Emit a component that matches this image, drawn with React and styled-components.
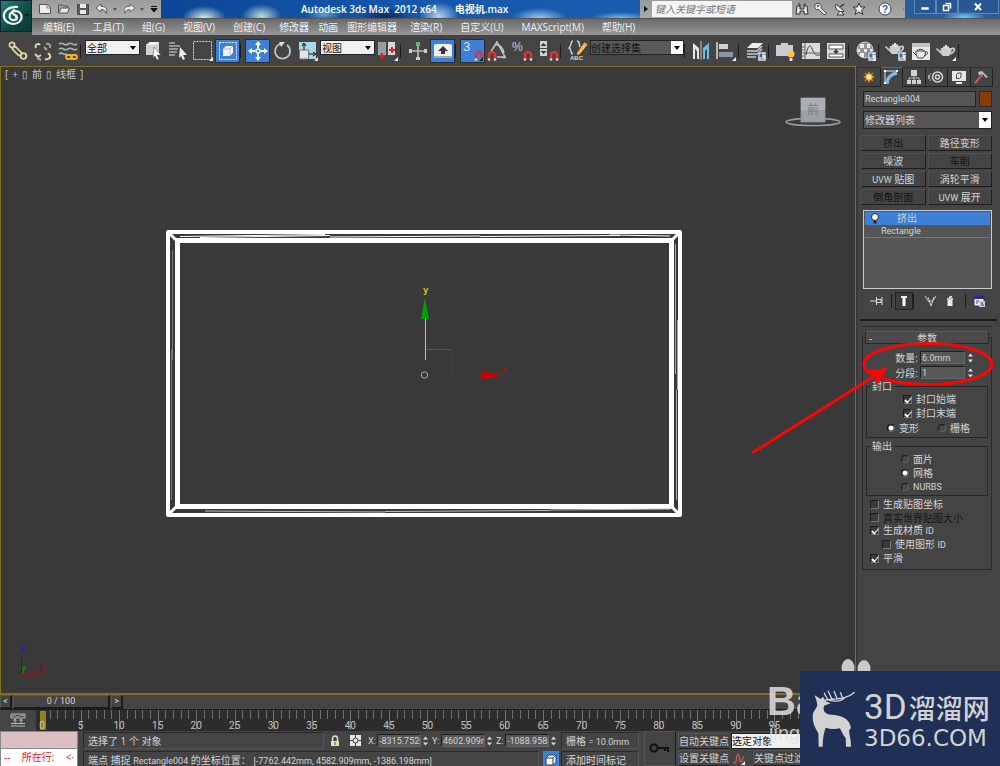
import React from "react";
import styled, { createGlobalStyle, css } from "styled-components";

const GlobalStyle = createGlobalStyle`
  * { box-sizing: border-box; }
  html, body { margin: 0; padding: 0; background: #444; }
  body, button, input, select {
    font-family: "Open Sans", "Noto Sans CJK SC", sans-serif;
    font-size: 10px;
    line-height: 12px;
    color: #d4d4d4;
  }
  button, input, select { margin: 0; padding: 0; border: 0; background: none; border-radius: 0; outline: none; }
  fieldset { margin: 0; min-width: 0; }
`;

const Shell = styled.div`
  position: relative;
  display: flex;
  flex-direction: column;
  height: 100vh;
  min-height: 600px;
  overflow: hidden;
  background: #444;
`;

const En = styled.span`
  font-family: Roboto, sans-serif;
  font-size: 9px;
`;

/* ---------- header ---------- */
const Header = styled.header`
  display: flex;
  height: 35px;
  flex: none;
`;
const AppButton = styled.button`
  width: 32px;
  height: 32px;
  flex: none;
  background: linear-gradient(135deg, #2f8078, #0c4743 60%, #093a38);
  border: 1px solid #123;
`;
const HeaderRows = styled.div`
  flex: 1;
  min-width: 0;
  display: flex;
  flex-direction: column;
`;
const TitleRow = styled.div`
  display: flex;
  height: 18px;
`;
const QuickBar = styled.div`
  display: flex;
  align-items: center;
  width: 129px;
  padding-left: 3px;
  background: linear-gradient(#9c9c9c, #aeaeae);
`;
const QuickButton = styled.button`
  display: flex;
  align-items: center;
  justify-content: center;
  width: ${(p) => p.$w || 19}px;
  height: 18px;
  flex: none;
`;
const Title = styled.div`
  flex: 1;
  display: flex;
  align-items: center;
  gap: 18px;
  padding-left: 140px;
  white-space: nowrap;
  font-weight: 600;
  color: #fff;
  background:
    radial-gradient(ellipse 22px 12px at 9% 100%, #d8efe0, transparent),
    radial-gradient(ellipse 20px 12px at 21% 90%, #b9dcd5, transparent),
    radial-gradient(ellipse 18px 8px at 34% 80%, #5d9fd0, transparent),
    radial-gradient(ellipse 26px 9px at 47% 90%, #082858, transparent),
    radial-gradient(ellipse 20px 14px at 58% 90%, #b4d4f0, transparent),
    radial-gradient(ellipse 28px 10px at 79% 100%, #9bcbe8, transparent),
    radial-gradient(ellipse 30px 6px at 96% 100%, #7fb5e0, transparent),
    linear-gradient(90deg, #0c4696, #1557ac 50%, #1a5db0);
`;
const SearchArea = styled.div`
  display: flex;
  width: 265px;
  flex: none;
  align-items: center;
  background: linear-gradient(#999, #a8a8a8);
`;
const SearchInput = styled.input`
  width: 140px;
  height: 16px;
  padding-left: 3px;
  background: #f4f4f4;
  color: #555;
  font-style: italic;
  &::placeholder { color: #777; opacity: 1; }
`;
const WindowButtons = styled.div`
  display: flex;
  width: 95px;
  flex: none;
  padding: 0 1px 4px 9px;
  background: radial-gradient(ellipse 22px 8px at 62% 100%, #6fd0ff, transparent), #2a5c9c;
`;
const WindowButton = styled.button`
  flex: ${(p) => p.$grow || 1};
  display: flex;
  align-items: center;
  justify-content: center;
  border: 1px solid #5d87b8;
  border-top: 0;
  background: rgba(40, 84, 140, 0.6);
`;
const MenuRow = styled.nav`
  display: flex;
  flex: 1;
  align-items: center;
  padding-left: 2px;
  border-top: 1px solid #555;
  background: linear-gradient(#6a6a6a, #969696);
`;
const MenuItem = styled.button`
  padding: ${(p) => (p.$plain ? "0 4px 0 5px" : "0 9px")};
  color: #f0f0f0;
  white-space: nowrap;
`;

/* ---------- toolbar ---------- */
const Toolbar = styled.div`
  display: flex;
  align-items: center;
  height: 31px;
  flex: none;
  padding-left: 5px;
  background: #444;
`;
const Tool = styled.button`
  display: flex;
  align-items: center;
  justify-content: center;
  width: 25px;
  height: 24px;
  flex: none;
  ${(p) => p.$on && css`
    background: #3c80d8;
    border: 1px solid #26303c;
  `}
`;
const Separator = styled.span`
  width: 5px;
  height: 14px;
  flex: none;
  border-left: 1px solid #1c1c1c;
  margin-right: ${(p) => (p.$tight ? "-1px" : "0")};
`;
const SelectBox = styled.label`
  position: relative;
  display: flex;
  width: ${(p) => p.$w || "auto"};
  height: ${(p) => p.$h || 15}px;
  flex: none;
  margin: ${(p) => p.$m || "0 0 6px"};
  border: 1px solid #222;
  background: ${(p) => p.$bg || "#f0f0f0"};
  &::after {
    content: "";
    position: absolute;
    right: 3px;
    top: calc(50% - 2px);
    border: 3px solid transparent;
    border-top: 4px solid #000;
    border-bottom: 0;
    pointer-events: none;
  }
`;
const Select = styled.select`
  appearance: none;
  width: 100%;
  padding-left: ${(p) => p.$pad || 0}px;
  color: ${(p) => p.$color || "#111"};
  background: ${(p) => (p.$split ? "linear-gradient(90deg, transparent calc(100% - 12px), #fff 0)" : "none")};
`;

/* ---------- body ---------- */
const Main = styled.main`
  display: flex;
  flex: 1;
  min-height: 0;
`;
const Viewport = styled.section`
  position: relative;
  flex: 1;
  min-width: 0;
  border: 1px solid #80701f;
  border-bottom-width: 2px;
  background: #393939;
`;
const Scene = styled.svg`
  display: block;
  width: 100%;
  height: 100%;
`;
const ViewLabel = styled.div`
  position: absolute;
  left: 4px;
  top: 1px;
  display: flex;
  gap: 4px;
  white-space: nowrap;
  color: #ccc;
`;
const Panel = styled.aside`
  width: 144px;
  flex: none;
  padding: 1px 8px 0 5px;
  border-left: 2px solid #393939;
  background: #444;
`;
const Tabs = styled.div`
  display: flex;
  margin: 0 -1px 0 -5px;
  height: 20px;
`;
const Tab = styled.button`
  flex: 1;
  display: flex;
  align-items: center;
  justify-content: center;
  border-right: 1px solid #222;
  border-top: 1px solid ${(p) => (p.$on ? "#666" : "#333")};
  border-bottom: 1px solid ${(p) => (p.$on ? "transparent" : "#222")};
`;
const NameRow = styled.div`
  display: flex;
  gap: 3px;
  margin: 4px 0;
  height: 16px;
`;
const NameInput = styled.input`
  flex: 1;
  min-width: 0;
  padding-left: 1px;
  border: 1px solid #222;
  background: #555;
  font-family: Roboto, sans-serif;
  font-size: 9px;
`;
const Swatch = styled.button`
  width: 13px;
  border: 1px solid #2a2a2a;
  background: #8a3c08;
`;
const ModGrid = styled.div`
  display: grid;
  grid-template-columns: 1fr 1fr;
  gap: 2px;
  margin: 6px 0 5px -2px;
`;
const ModButton = styled.button`
  height: 16px;
  color: ${(p) => (p.$used ? "#141414" : "#d4d4d4")};
  border: 1px solid #505050;
  border-right-color: #1e1e1e;
  border-bottom-color: #1e1e1e;
`;
const Stack = styled.ul`
  list-style: none;
  margin: 0;
  padding: 1px;
  height: 79px;
  border: 1px solid #c8ccd0;
  background: #555;
`;
const StackItem = styled.li`
  display: flex;
  align-items: center;
  height: 13px;
  padding-left: ${(p) => (p.$on ? 6 : 16)}px;
  gap: 18px;
  border-bottom: 1px solid #777;
  ${(p) => p.$on && css`background: #3c80d8; border-color: #3c80d8;`}
`;
const StackTools = styled.div`
  display: flex;
  align-items: center;
  height: 24px;
  margin-bottom: 6px;
`;
const StackTool = styled.button`
  display: flex;
  align-items: center;
  justify-content: center;
  width: ${(p) => p.$w || 18}px;
  height: 18px;
  margin-right: ${(p) => p.$mr || 0}px;
  ${(p) => p.$on && css`border: 1px solid #222; background: #3d3d3d;`}
`;
const Divider = styled.hr`
  margin: 0 -5px 5px -3px;
  border: 0;
  border-top: 2px solid #1c1c1c;
`;
const Rollout = styled.section`
  position: relative;
  margin-left: -1px;
  padding: 4px 3px 0;
  border-top: 1px solid #2a2a2a;
`;
const RolloutFrame = styled.div`
  margin: -7px -3px 0;
  padding: 12px 3px 4px;
  border: 1px solid #292929;
`;
const RolloutHead = styled.button`
  position: relative;
  display: flex;
  width: 100%;
  height: 13px;
  align-items: center;
  justify-content: center;
  border: 1px solid #292929;
  border-top-color: #5a5a5a;
  background: #4a4a4a;
  &::before { content: "-"; position: absolute; left: 3px; }
`;
const Field = styled.label`
  display: flex;
  align-items: center;
  justify-content: flex-end;
  height: 15px;
  padding-right: 14px;
  gap: 2px;
`;
const SpinInput = styled.input`
  width: ${(p) => p.$w || 45}px;
  height: 13px;
  padding-left: 1px;
  border: 1px solid #1e1e1e;
  border-right-color: #666;
  border-bottom-color: #666;
  background: #585858;
  font-family: Roboto, sans-serif;
  font-size: 9px;
`;
const Spinner = styled.svg`
  width: 7px;
  height: 12px;
  flex: none;
`;
const Group = styled.fieldset`
  margin-top: ${(p) => p.$top || 0}px;
  padding: 0 0 1px;
  border: 1px solid #272727;
`;
const Legend = styled.legend`
  margin-left: 3px;
  padding: 0 2px;
  height: 12px;
`;
const Option = styled.label`
  display: flex;
  align-items: center;
  height: ${(p) => p.$h || 14}px;
  gap: 4px;
  padding-left: ${(p) => p.$indent || 0}px;
  color: ${(p) => (p.$off ? "#161616" : "#d4d4d4")};
  white-space: nowrap;
`;
const OptionPair = styled.div`
  display: flex;
  height: 16px;
  gap: 19px;
  align-items: center;
`;
const Check = styled.input`
  appearance: none;
  position: relative;
  width: 9px;
  height: 9px;
  flex: none;
  background: #3a3a3a;
  border: 1px solid #1a1a1a;
  border-right-color: #777;
  border-bottom-color: #777;
  &:checked::after {
    content: "";
    position: absolute;
    left: 2px;
    top: 0;
    width: 3px;
    height: 5px;
    border: solid #fff;
    border-width: 0 1px 2px 0;
    transform: rotate(40deg);
  }
`;
const Radio = styled.input`
  appearance: none;
  width: 8px;
  height: 8px;
  flex: none;
  border-radius: 50%;
  border: 1px solid #1a1a1a;
  border-right-color: #666;
  border-bottom-color: #666;
  background: #484848;
  &:checked { background: radial-gradient(circle, #fff 2px, #333 3px); }
`;
const Mark = styled.svg`
  position: absolute;
  right: -4px;
  top: 11px;
  width: 248px;
  height: 120px;
  pointer-events: none;
`;

/* ---------- timeline and status ---------- */
const Track = styled.div`
  display: flex;
  height: 14px;
  flex: none;
  gap: 1px;
  margin-right: 144px;
`;
const TrackButton = styled.button`
  width: ${(p) => p.$w}px;
  border: 1px solid #555;
  border-right: 2px solid #1c1c1c;
  border-bottom: 2px solid #1c1c1c;
  font-family: Roboto, sans-serif;
  font-size: 9px;
  line-height: 9px;
`;
const Timeline = styled.div`
  display: flex;
  height: 22px;
  flex: none;
  border-top: 1px solid #1c1c1c;
  background: #2c2c2c;
`;
const CurveButton = styled.button`
  width: 36px;
  flex: none;
  background: #444;
`;
const Ruler = styled.div`
  display: flex;
  flex: 1;
  padding: 0 187px 0 6px;
`;
const Major = styled.div`
  position: relative;
  display: flex;
  flex: 1;
`;
const Tick = styled.i`
  flex: 1;
  height: ${(p) => (p.$major ? 20 : 9)}px;
  border-left: 1px solid #707070;
`;
const TickLabel = styled.span`
  position: absolute;
  left: -10px;
  bottom: -1px;
  width: 20px;
  text-align: center;
  color: #c4c4c4;
  font-family: Roboto, sans-serif;
  font-size: 10px;
`;
const Playhead = styled.span`
  position: absolute;
  left: -2px;
  top: 1px;
  width: 6px;
  height: 19px;
  background: #8c8420;
`;
const Status = styled.footer`
  display: flex;
  height: 35px;
  flex: none;
  gap: 5px;
`;
const Listener = styled.div`
  width: 78px;
  flex: none;
  padding: 1px;
  background: #888;
`;
const ListenerLine = styled.div`
  height: ${(p) => p.$h}px;
  padding: 2px 3px;
  margin-bottom: 1px;
  background: ${(p) => p.$bg};
  display: flex;
  justify-content: space-between;
  color: #f01010;
  overflow: hidden;
`;
const StatusCol = styled.div`
  display: flex;
  flex-direction: column;
  gap: 1px;
  width: 556px;
  flex: none;
`;
const StatusLine = styled.div`
  display: flex;
  align-items: center;
  height: 18px;
  padding-top: 1px;
`;
const Prompt = styled.div`
  width: ${(p) => p.$w}px;
  height: 17px;
  padding: 2px 4px;
  white-space: nowrap;
  border: 1px solid #2a2a2a;
  border-right-color: #555;
  border-bottom-color: #555;
  margin-left: ${(p) => (p.$end ? "auto" : 0)};
  margin-right: ${(p) => p.$mr || 0}px;
`;
const IconSlot = styled.button`
  display: flex;
  width: 21px;
  height: 17px;
  align-items: center;
  justify-content: center;
  ${(p) => p.$on && css`width: 16px; background: #3c80d8;`}
`;
const Coord = styled.label`
  display: flex;
  align-items: center;
  width: 64px;
  gap: 1px;
  font-family: Roboto, sans-serif;
  font-size: 9px;
  & > span { width: 10px; padding-left: 2px; }
`;
const KeyButton = styled.button`
  width: 32px;
  border: 1px solid #555;
  border-right-color: #1e1e1e;
`;
const KeyCol = styled.div`
  display: flex;
  flex-direction: column;
  width: ${(p) => p.$w}px;
  padding-top: 2px;
  gap: 1px;
  margin-left: -3px;
`;
const FlatButton = styled.button`
  height: 16px;
  text-align: left;
  white-space: nowrap;
  border: 1px solid #555;
  border-width: 1px 0 1px 1px;
  border-bottom-color: #222;
`;
const KeyRow = styled.div`
  display: flex;
  align-items: center;
  gap: 8px;
`;

/* ---------- watermarks ---------- */
const Brand = styled.div`
  position: absolute;
  right: 0;
  bottom: 0;
  width: 200px;
  height: 95px;
  display: flex;
  background: #1f2f55;
  color: #d2d2d2;
`;
const BrandText = styled.div`
  display: flex;
  flex-direction: column;
  padding-top: 19px;
  white-space: nowrap;
`;
const BrandTop = styled.div`
  display: flex;
  align-items: center;
  gap: 2px;
  height: 36px;
  font: 500 27px/36px "Noto Sans CJK SC", sans-serif;
  & > span { font: 400 35px/36px Roboto, sans-serif; }
`;
const BrandBottom = styled.div`
  font: 400 23px/24px "DejaVu Sans", sans-serif;
`;
const Baidu = styled.div`
  position: absolute;
  right: 200px;
  bottom: 21px;
  width: 33px;
  overflow: hidden;
  color: rgba(225, 225, 225, 0.85);
  font: 700 40px/40px "Liberation Sans", sans-serif;
  & > small { display: block; padding-left: 2px; font-size: 20px; line-height: 24px; font-weight: 400; }
`;
const Paws = styled.svg`
  position: absolute;
  right: 128px;
  bottom: 90px;
  width: 32px;
  height: 18px;
`;

const G = ({ w = 22, h = 22, children }) => (
  <svg width={w} height={h} viewBox={`0 0 ${w} ${h}`} fill="none" aria-hidden="true">{children}</svg>
);
const Magnet = ({ x = 11, y = 10 }) => (
  <g transform={`translate(${x} ${y})`}>
    <path d="M2 9V5a3 3 0 0 1 6 0v4" stroke="#e03434" strokeWidth="2.500" />
    <path d="M.8 9.500h2.400M6.800 9.500h2.400" stroke="#eee" strokeWidth="2" />
  </g>
);
const Corner = () => <path d="M21 17v4h-4z" fill="#eee" />;
const Teapot = () => (
  <g>
    <path d="M6 9h10c1 2 1 5-2 8H8C5 15 5 12 6 9z" fill="#c9ced2" />
    <path d="M8 8.500h6M11 6v2" stroke="#dfe3e6" strokeWidth="2" />
    <path d="M6 14 1.500 9.500M16 10c4-2 5 1 0 5" stroke="#c9ced2" strokeWidth="1.600" />
  </g>
);
const Badge = () => (
  <g>
    <path d="M13 12h8v9h-8z" fill="#eee" stroke="#555" strokeWidth=".6" />
    <path d="M14.500 13.500h3v4h-3z" fill="#2e6cc0" />
    <path d="M18.500 14.500h2M14.500 19h5" stroke="#777" />
  </g>
);
const Spin = () => (
  <Spinner viewBox="0 0 7 12" aria-hidden="true"><path d="M3.500 1.500 6 4.500H1zM3.500 10.500 6 7.500H1z" fill="#ddd" /></Spinner>
);

const icons = {
  link: <G><g fill="none" stroke="#e3d3a8" strokeWidth="1.800"><circle cx="5" cy="5" r="2.600" /><rect x="4.500" y="9" width="11" height="4" rx="2" transform="rotate(45 10 11)" /><circle cx="16.500" cy="16" r="2.800" /></g></G>,
  unlink: <G><path d="M4 8a2.500 2.500 0 1 1 4-3M13 19c3 1 6-1 5-4l-2-2M3 14l3 3 3-2" stroke="#e3d3a8" strokeWidth="2" /><path d="M14 4c3-1 5 1 4 4M12 7l3 3M5 18l4 2" stroke="#a4a4a4" strokeWidth="2" /></G>,
  bind: <G><path d="M2 4c4-3 5 3 9 0s5 3 9 0M2 9c4-3 5 3 9 0s5 3 9 0M2 14c4-3 4 2 8 0" stroke="#aab0b2" strokeWidth="1.600" /><rect x="9" y="15" width="6" height="4" rx="2" stroke="#f2b52c" strokeWidth="1.800" /><rect x="14" y="15" width="6" height="4" rx="2" stroke="#f2b52c" strokeWidth="1.800" /></G>,
  pick: <G><path d="m4 5 4-3h9v10l-4 3H4z" fill="#cfd4d8" /><path d="m4 5 4-3h9l-4 3z" fill="#f5f5f5" /><path d="m12 7 7 8h-4l2 4-2 1-2-4-2 2z" fill="#fff" stroke="#444" strokeWidth=".5" /></G>,
  list: <G><path d="M2 3h6M2 6h11M2 9h9M2 12h8M2 15h6" stroke="#a9b1b6" strokeWidth="1.500" /><path d="m13 7 7 8h-4l2 4-2 1-2-4-2 2z" fill="#eee" /></G>,
  rect: <G><path d="M1.500 1.500h18v18h-18z" stroke="#d7d7d7" strokeDasharray="2 1" /><Corner /></G>,
  window: <G><path d="M2.500 2.500h17v17h-17z" stroke="#dcecff" strokeDasharray="2 1" /><path d="m6 9 3-3h7v7l-3 3H6z" fill="#f4f4f4" /><path d="M6 9h7v7M13 9l3-3" stroke="#b4bac0" /></G>,
  move: <G><path d="m11 1 3 4H8zm0 20 3-4H8zM1 11l4-3v6zm20 0-4-3v6z" fill="#fff" /><path d="M11 4v4m0 6v4M4 11h4m6 0h4" stroke="#fff" strokeWidth="2" /><circle cx="11" cy="11" r="2" stroke="#fff" strokeWidth="1.500" /></G>,
  rotate: <G><path d="M8 4a7.500 7.500 0 1 0 7 1" stroke="#bfc4c8" strokeWidth="1.800" /><path d="M7 2h6L9 7z" fill="#ddd" /></G>,
  scale: <G><path d="M2 2h17v17H2z" fill="#a9d7e8" /><path d="M2.500 10h9v9h-9z" fill="#e2e5e8" stroke="#777" /><path d="M7 10V4m-2 2 2-3 2 3M12 14h6m-2-2 3 2-3 2" stroke="#111" /><Corner /></G>,
  pivot: <G><path d="M1 2h8v13H1z" fill="#969da3" /><path d="M11 2h7v13h-7z" fill="#d5dadd" /><path d="M5 13v6m-3-3h6M15 7v6m-3-3h6" stroke="#e02020" strokeWidth="2" /><Corner /></G>,
  manip: <G><path d="M11 5v13M3 11h16" stroke="#bbb" strokeWidth="1.600" /><path d="M9 2h4v4H9z" fill="#69b868" /><path d="M2 9h3v4H2zm15 0h3v4h-3zM9 17h4v3H9z" fill="#ccc" /></G>,
  keyb: <G><rect x="2" y="4" width="18" height="14" rx="2" fill="#f0f0f0" /><path d="M2 16h18v2H2z" fill="#aaa" /><path d="m11 6 5 5h-3v3H9v-3H6z" fill="#333" /></G>,
  snap3: <G><text x="1" y="11" fontSize="13" fill="#dce9fb" fontFamily="Liberation Sans, sans-serif">3</text><Magnet x={12} /><path d="M21 17v4h-4z" fill="#101820" /></G>,
  angle: <G><path d="M3 13 10 2l8 15h-8M8 5c5-1 8 3 9 8M15 17.500h4" stroke="#c6c6c6" strokeWidth="1.500" /><Magnet x={0} /></G>,
  percent: <G><text x="0" y="11" fontSize="12" fill="#ccc" fontFamily="Liberation Sans, sans-serif">%</text><Magnet x={11} /></G>,
  spin: <G><path d="M3 1h7v15H3z" fill="#ccd2d6" /><path d="m6.500 3 3 3h-6zm0 11-3-3h6z" fill="#333" /><path d="M3 8.500h7" stroke="#444" /><Magnet x={12} /></G>,
  named: <G><path d="M6 1C3 1 5 6 2 8c3 1 1 6 4 6M10 1c3 0 2 4 3 6" stroke="#c9cfd2" strokeWidth="1.500" /><path d="m10 13 7-10 3 2-7 9-3 1z" fill="#f3c045" /><path d="m17 3 3 2" stroke="#e96" strokeWidth="2" /><text x="3" y="20" fontSize="6" fontWeight="700" fill="#ddd" fontFamily="Liberation Sans, sans-serif">ABC</text></G>,
  mirror: <G><path d="M11 1v19" stroke="#999" strokeWidth="1.500" /><path d="M3 3l6 5v11H7v-8l-2-2v10H3z" fill="#e6e6e6" /><path d="M19 3l-6 5v11h2v-8l2-2v10h2z" fill="#73b9e8" /></G>,
  align: <G><path d="M2 2v17" stroke="#ddd" strokeWidth="1.500" /><path d="M4 4h9v5H4z" fill="#cfd2d4" /><path d="M4 12h14v5H4z" fill="#8995a8" /><Corner /></G>,
  layers: <G><path d="m2 8 5-5h11l-5 5z" fill="#eee" /><path d="M2 11h10l5-5M2 14h10l5-5M2 17h9" stroke="#c6cbd0" strokeWidth="1.500" /><Badge /></G>,
  ribbon: <G><path d="M1 5h5V3h7v2h5v11H1z" fill="#c8cdd4" /><circle cx="16" cy="14" r="3.500" fill="#ffc34a" /><path d="M14.500 18h3v3h-3z" fill="#ddd" /></G>,
  curve: <G><path d="M2 3h18v16H2z" fill="#d9dcdf" /><path d="M5 3v16M2 13h18M2 7h3M2 10h3M2 16h3" stroke="#666" /><path d="M6 15C9 1 11 6 13 11s4 4 7 4" stroke="#444" /></G>,
  schem: <G><path d="M2 3h18v16H2z" fill="#d9dcdf" /><path d="M4 5h14v4H4zm0 9h14v3H4z" fill="#fff" stroke="#555" /><path d="M11 9v3m-2-1 2 2 2-2" stroke="#333" strokeWidth="1.500" /></G>,
  material: <G><circle cx="10" cy="10" r="8" fill="#8e959b" /><path d="M5 4h4v4H5zm7 0h3v4h-3zM2 9h3v3H2zm7 0h3v3H9zm6 0h3v3h-3zM5 13h4v4H5z" fill="#eee" /><circle cx="10" cy="10" r="8" stroke="#ccc" /><Badge /><Corner /></G>,
  render: <G><g transform="translate(-1 -3)"><Teapot /></g><Badge /></G>,
  frame: <G><path d="M2 3h18v17H2z" fill="#e8e8e8" /><path d="M2 3h18v4H2z" fill="#bfc4c8" /><path d="M6 11h9c1 3 0 5-2 7H8c-2-2-2-4-2-7zM7 10.500c2-1.500 5-1.500 7 0M6 15l-3-3M15 12c4-1 3 3-1 4" stroke="#444" /></G>,
  teapot: <G><g transform="translate(0 -1)"><Teapot /></g><Corner /></G>,
};

const T = ({ i, on, name }) => <Tool type="button" $on={on} aria-label={name || i}>{icons[i]}</Tool>;

const menus = [
  ["编辑(E)"], ["工具(T)"], ["组(G)"], ["视图(V)"], ["创建(C)"], ["修改器", 1], ["动画", 1],
  ["图形编辑器", 1], ["渲染(R)"], ["自定义(U)"], ["MAXScript(M)"], ["帮助(H)"],
];
const modifiers = [
  ["挤出", 1], ["路径变形"], ["噪波"], ["车削", 1], ["UVW 贴图"], ["涡轮平滑"], ["倒角剖面", 1], ["UVW 展开"],
];
const dot = <G w={6} h={6}><path d="M1 2h4L3 5z" fill="#555" /></G>;

function TopBar() {
  return (
    <Header>
      <AppButton type="button" aria-label="应用程序">
        <G w={30} h={30}>
          <path d="M17 6C7 5 2 11 3 16c1 6 10 9 15 5 5-5 2-11-4-11-6 1-7 7-3 9 4 1 6-3 3-4" stroke="#e9f3f0" strokeWidth="2.200" />
          <path d="M14 9c-4 0-3 4 0 5s3 4 0 5" stroke="#e9f3f0" strokeWidth="2" />
          <path d="M23 13h5l-2.500 3z" fill="#031a18" />
        </G>
      </AppButton>
      <HeaderRows>
        <TitleRow>
          <QuickBar>
            <QuickButton aria-label="新建"><G w={14} h={14}><path d="M1.500 2.500h8l3 3v6h-11z" fill="#eee" stroke="#555" /><path d="M9 2v4h4" stroke="#777" /></G></QuickButton>
            <QuickButton aria-label="打开"><G w={14} h={14}><path d="M1.500 11V3h4l1 1h4v2" stroke="#555" /><path d="m1.500 11 3-5h8l-2 5z" fill="#e8e8e8" stroke="#555" /></G></QuickButton>
            <QuickButton aria-label="保存"><G w={14} h={14}><path d="M1.500 2.500h11v10h-11z" fill="#555c66" stroke="#444" /><path d="M4 2h6v4H4zm0 6h6v4H4z" fill="#e8e8e8" /></G></QuickButton>
            <QuickButton aria-label="撤消"><G w={14} h={14}><path d="m1 6 5-4v2.500c5-.5 7 3 5 7 0-3-2-4-5-4V10z" fill="#eee" stroke="#444" strokeWidth=".8" /></G></QuickButton>
            <QuickButton aria-label="撤消列表" $w={8}>{dot}</QuickButton>
            <QuickButton aria-label="重做"><G w={14} h={14}><path d="M13 6 8 2v2.500c-5-.5-7 3-5 7 0-3 2-4 5-4V10z" fill="#eee" stroke="#555" strokeWidth=".8" /></G></QuickButton>
            <QuickButton aria-label="重做列表" $w={8}>{dot}</QuickButton>
            <QuickButton aria-label="自定义" $w={16}><G w={8} h={8}><path d="M1 1.500h6M1 3.500h6L4 7z" stroke="#111" fill="#111" /></G></QuickButton>
          </QuickBar>
          <Title><span>Autodesk 3ds Max &nbsp;2012 x64</span><span>电视机.max</span></Title>
          <SearchArea>
            <QuickButton $w={12} aria-label="展开"><G w={6} h={8}><path d="m1 1 4 3-4 3z" fill="#111" /></G></QuickButton>
            <SearchInput aria-label="搜索" placeholder="键入关键字或短语" />
            <QuickButton aria-label="查找"><G w={14} h={14}><path d="M2 4h3v3h4V4h3l1 8H9V9H5v3H1z" fill="#e4e4e4" stroke="#333" /><path d="M3 2h2v2M9 4V2h2" stroke="#333" /></G></QuickButton>
            <QuickButton aria-label="钥匙"><G w={14} h={14}><path d="M3 1.500a3 3 0 1 0 2 6L10 13l2.500-1.500L7 6c1-3-1-4.500-4-4.500z" fill="#eee" stroke="#444" /><circle cx="4" cy="4" r="1" fill="#444" /></G></QuickButton>
            <QuickButton aria-label="通讯"><G w={14} h={14}><path d="M3 2c-2 5 3 9 8 7zM7 9l-3 4h7L8 9" fill="#eee" stroke="#333" /><path d="m7 5 4-3" stroke="#333" strokeWidth="1.500" /></G></QuickButton>
            <QuickButton aria-label="收藏"><G w={14} h={14}><path d="m7 1 1.700 4h4.300l-3.400 2.800L11 12.500 7 9.800l-4 2.700 1.400-4.700L1 5h4.300z" fill="#eee" stroke="#333" /></G></QuickButton>
            <QuickButton $w={34} aria-label="帮助"><G w={14} h={14}><circle cx="7" cy="7" r="6" fill="#fff" stroke="#345" /><text x="4" y="11" fontSize="10" fontWeight="700" fill="#1e56c4" fontFamily="Liberation Sans, sans-serif">?</text></G></QuickButton>
            <QuickButton $w={3} aria-label="帮助列表">{dot}</QuickButton>
          </SearchArea>
          <WindowButtons>
            <WindowButton aria-label="最小化"><G w={10} h={8}><path d="M1 4h8v3H1z" fill="#fff" stroke="#345" strokeWidth=".5" /></G></WindowButton>
            <WindowButton aria-label="还原"><G w={10} h={10}><path d="M3.500 1.500h5v5M1.500 3.500h5v5h-5z" stroke="#fff" strokeWidth="1.500" /></G></WindowButton>
            <WindowButton $grow={2} aria-label="关闭"><G w={10} h={10}><path d="m2 1.500 6 6.500M8 1.500 2 8" stroke="#fff" strokeWidth="2" /></G></WindowButton>
          </WindowButtons>
        </TitleRow>
        <MenuRow>
          {menus.map(([m, plain]) => <MenuItem key={m} type="button" $plain={plain}>{m}</MenuItem>)}
        </MenuRow>
      </HeaderRows>
    </Header>
  );
}

function MainToolbar() {
  return (
    <Toolbar>
      <T i="link" /><T i="unlink" /><T i="bind" />
      <Separator />
      <SelectBox $w="55px"><Select $pad={1} aria-label="选择过滤器"><option>全部</option></Select></SelectBox>
      <T i="pick" /><T i="list" /><T i="rect" /><T i="window" on />
      <Separator />
      <T i="move" on /><T i="rotate" /><T i="scale" />
      <SelectBox $w="55px"><Select $pad={1} aria-label="参考坐标系"><option>视图</option></Select></SelectBox>
      <T i="pivot" />
      <Separator />
      <T i="manip" /><T i="keyb" on />
      <Separator />
      <T i="snap3" on /><T i="angle" /><T i="percent" /><T i="spin" />
      <Separator />
      <T i="named" />
      <SelectBox $w="94px" $bg="#5a5a5a"><Select $split aria-label="命名选择集"><option>创建选择集</option></Select></SelectBox>
      <Separator $tight />
      <T i="mirror" /><T i="align" />
      <Separator />
      <T i="layers" />
      <Separator />
      <T i="ribbon" /><T i="curve" /><T i="schem" />
      <Separator />
      <T i="material" />
      <Separator />
      <T i="render" /><T i="frame" /><T i="teapot" />
      <Separator />
    </Toolbar>
  );
}

function FrontView() {
  return (
    <Viewport>
      <ViewLabel><span>[</span><span>+</span><span>▯</span><span>前</span><span>▯</span><span>线框</span><span>]</span></ViewLabel>
      <Scene viewBox="1 67 854 626" preserveAspectRatio="xMidYMid meet" fill="none" aria-label="前视图">
        <g stroke="#fff">
          <path d="M168 232h512v283H168z" strokeWidth="4" strokeLinejoin="round" />
          <path d="M177.500 240.500h494v266h-494z" strokeWidth="5" />
          <path d="m168 232 9 9M680 232l-9 9M168 515l9-9M680 515l-9-9" strokeWidth="3" />
          <path d="m180 236.500 145-2M200 237.500l130-2M330 237l150-1M480 236.500l140-1M610 235l60 1" strokeWidth="1" />
          <path d="m205 511 180 1M385 511.500l165-1M550 510l120-1" stroke="#bbb" />
          <path d="M675.500 244v130M677.500 320v70M676.500 390v110" stroke="#aaa" />
          <path d="M172.500 250v110M171.500 350v150" stroke="#777" />
        </g>
        <path d="M425.500 360v-42" stroke="#d8d020" />
        <path d="m425 298 4 21h-8z" fill="#00a000" />
        <path d="M426 349.500h25" stroke="#0a8a0a" />
        <path d="M451.500 349v26" stroke="#c00808" />
        <path d="M441 375.500h42" stroke="#b00808" />
        <path d="m482 371 21 4.500-21 4z" fill="#cc0000" />
        <circle cx="424.500" cy="375" r="3.200" stroke="#aaa" />
        <g fontFamily="Liberation Mono, monospace" fontSize="9" fontWeight="700">
          <text x="423" y="293" fill="#d8d020">y</text>
          <text x="501" y="372" fill="#a01010">x</text>
          <text x="20" y="651" fill="#2020a8">z</text>
          <text x="21" y="671" fill="#109010">y</text>
          <text x="40" y="671" fill="#901010">x</text>
        </g>
        <path d="M21.500 655v19" stroke="#1a1aa0" />
        <path d="M21 674.500h20" stroke="#a01212" />
        <ellipse cx="813" cy="122" rx="27" ry="3.500" stroke="#9aa0a6" strokeWidth="1.500" />
        <path d="M801 98h24v24h-24z" fill="#9da1a7" stroke="#8b9096" />
        <path d="M801 98h24v12h-24z" fill="#abafb5" />
        <text x="807" y="114" fontSize="12" fill="#787d84" fontFamily="Noto Sans CJK SC, sans-serif">前</text>
      </Scene>
    </Viewport>
  );
}

function CommandPanel() {
  return (
    <Panel>
      <Tabs>
        <Tab aria-label="创建"><G w={16} h={16}><path d="m8 2 1.500 3 3-1.500L11 6.500 14 8l-3 1.500 1.500 3-3-1.500L8 14l-1.500-3-3 1.500L5 9.500 2 8l3-1.500-1.500-3 3 1.500z" fill="#f08a1c" /><circle cx="8" cy="8" r="2.500" fill="#fff2a8" /></G></Tab>
        <Tab $on aria-label="修改"><G w={16} h={16}><path d="M4 15C4 9 8 5 14 4" stroke="#77bdf0" strokeWidth="3.500" /><path d="M2 14V2h12" stroke="#ddd" /><path d="M1 1h2v2H1zM1 13h2v2H1zM13 1h2v2h-2z" fill="#fff" /></G></Tab>
        <Tab aria-label="层次"><G w={16} h={16}><path d="M5 1h6v6H5zM1 11h4v4H1zM6 11h4v4H6zM11 11h4v4h-4z" fill="#d2d2d2" /><path d="M3 11V9h10v2M8 7v4" stroke="#bbb" /></G></Tab>
        <Tab aria-label="运动"><G w={16} h={16}><circle cx="9.500" cy="8" r="5" stroke="#d6d6d6" strokeWidth="1.500" /><circle cx="9.500" cy="8" r="2" stroke="#d6d6d6" strokeWidth="1.500" /><path d="M3 4c-2 2-2 6 0 8M.5 6v4" stroke="#aaa" /></G></Tab>
        <Tab aria-label="显示"><G w={16} h={16}><path d="M1 2h14v10H1zM5 13h6v2H5z" fill="#e6e6e6" /><path d="M5.500 5.500 7 4h3v4L8.500 9.500h-3z" stroke="#444" /></G></Tab>
        <Tab aria-label="实用程序"><G w={16} h={16}><path d="M2 14 10 5" stroke="#c0605c" strokeWidth="2" /><path d="m5 3 4-1 6 6-2 1-3-4-4 1z" fill="#bcc0c4" /></G></Tab>
      </Tabs>
      <NameRow><NameInput aria-label="名称" defaultValue="Rectangle004" /><Swatch aria-label="颜色" /></NameRow>
      <SelectBox $bg="#555" $h={18} $m="0"><Select $split $pad={1} $color="#d4d4d4" aria-label="修改器列表"><option>修改器列表</option></Select></SelectBox>
      <ModGrid>{modifiers.map(([m, u]) => <ModButton key={m} $used={u}>{m.startsWith("UVW") ? <><En>UVW</En>{m.slice(3)}</> : m}</ModButton>)}</ModGrid>
      <Stack>
        <StackItem $on><G w={8} h={11}><circle cx="4" cy="4" r="3.500" fill="#fff" stroke="#222" /><path d="M2.500 8h3v2.500h-3z" fill="#222" /></G>挤出</StackItem>
        <StackItem><En>Rectangle</En></StackItem>
      </Stack>
      <StackTools>
        <StackTool $w={28} aria-label="锁定堆栈"><G w={14} h={10}><path d="M0 5h6M6.500 1v8M7 3.500h4v3H7M12 1v8" stroke="#ddd" /></G></StackTool>
        <Separator $tight />
        <StackTool $w={18} $on aria-label="显示最终结果"><G w={8} h={12}><path d="M1 1h6v2H5.500v8h-3V3H1z" fill="#fff" /></G></StackTool>
        <Separator />
        <StackTool $w={26} aria-label="使唯一"><G w={14} h={12}><path d="m1 1 4 6m7-6L8 7M4 2l3 9 3-9M5 6h4" stroke="#ccc" /></G></StackTool>
        <StackTool $w={12} $mr={9} aria-label="移除修改器"><G w={8} h={12}><path d="M1.500 5h5v6h-5z" fill="#eee" /><path d="M1 4h6M3 2.500l3-1" stroke="#eee" strokeWidth="1.500" /></G></StackTool>
        <Separator />
        <StackTool $w={18} aria-label="配置修改器集"><G w={13} h={13}><path d="M1 1h10v10H1z" fill="#f4f4f4" stroke="#2a2a9c" /><path d="M1 1h10v3H1z" fill="#2a2aa0" /><path d="M6 6h6v6H6z" fill="#ccc" /><path d="M3 6h3M3 8h2M8 8h2M8 10h3" stroke="#444" /></G></StackTool>
      </StackTools>
      <Divider />
      <Rollout>
        <RolloutHead type="button">参数</RolloutHead>
        <RolloutFrame>
          <Field>数量:<SpinInput defaultValue="6.0mm" /><Spin /></Field>
          <Field>分段:<SpinInput defaultValue="1" /><Spin /></Field>
          <Group>
            <Legend>封口</Legend>
            <Option $indent={36}><Check type="checkbox" defaultChecked />封口始端</Option>
            <Option $indent={36}><Check type="checkbox" defaultChecked />封口末端</Option>
            <OptionPair>
              <Option $indent={20}><Radio type="radio" name="cap" defaultChecked />变形</Option>
              <Option><Radio type="radio" name="cap" />栅格</Option>
            </OptionPair>
          </Group>
          <Group $top={2}>
            <Legend>输出</Legend>
            <Option $indent={34}><Radio type="radio" name="out" />面片</Option>
            <Option $indent={34}><Radio type="radio" name="out" defaultChecked />网格</Option>
            <Option $indent={34}><Radio type="radio" name="out" /><En>NURBS</En></Option>
          </Group>
          <Option $h={16} $indent={4}><Check type="checkbox" />生成贴图坐标</Option>
          <Option $h={11} $indent={4} $off><Check type="checkbox" />真实世界贴图大小</Option>
          <Option $h={15} $indent={4}><Check type="checkbox" defaultChecked /><span>生成材质 <En>ID</En></span></Option>
          <Option $h={13} $indent={16}><Check type="checkbox" /><span>使用图形 <En>ID</En></span></Option>
          <Option $h={14} $indent={4}><Check type="checkbox" defaultChecked />平滑</Option>
        </RolloutFrame>
        <Mark viewBox="748 338 248 120" fill="none" stroke="#fb0505" aria-hidden="true">
          <ellipse cx="928" cy="364" rx="64" ry="20.500" strokeWidth="3" />
          <path d="M752 453 878 374" strokeWidth="3" />
          <path d="m886 369-20 3 11 3-1 9z" fill="#fb0505" strokeWidth="2" />
        </Mark>
      </Rollout>
    </Panel>
  );
}

function Bottom() {
  return (
    <>
      <Track><TrackButton $w={12}>&lt;</TrackButton><TrackButton $w={97}>0 / 100</TrackButton><TrackButton $w={12}>&gt;</TrackButton></Track>
      <Timeline>
        <CurveButton aria-label="迷你曲线编辑器"><G w={16} h={14}><path d="M1 1h14v4H1zM1 10.500h14M1 13h14M5 6v4m-1.500-2L5 6l1.500 2M11 6v4M9.500 8l1.500-2L12.500 8" stroke="#bbb" /><path d="M2 4c3-4 4 1 6 0s3-3 6-1" stroke="#bbb" /></G></CurveButton>
        <Ruler>
          {Array.from({ length: 20 }, (_, k) => (
            <Major key={k}>
              {k === 0 && <Playhead />}
              {[0, 1, 2, 3, 4].map((t) => <Tick key={t} $major={t === 0} />)}
              <TickLabel>{k * 5}</TickLabel>
            </Major>
          ))}
        </Ruler>
      </Timeline>
      <Status>
        <Listener>
          <ListenerLine $h={16} $bg="#dcbfc1" />
          <ListenerLine $h={17} $bg="#fff"><span>--</span><span>所在行:</span><span>&lt;·</span></ListenerLine>
        </Listener>
        <StatusCol>
          <StatusLine>
            <Prompt $w={241}>选择了 1 个 对象</Prompt>
            <IconSlot aria-label="锁定"><G w={10} h={12}><path d="M2.500 6V3.500a2.500 2.500 0 0 1 5 0V6" stroke="#ddd" strokeWidth="1.500" /><path d="M1 6h8v5H1z" fill="#e8dcb8" /><path d="M5 7v3" stroke="#555" /></G></IconSlot>
            <IconSlot aria-label="坐标模式"><G w={11} h={11}><path d="M0 0h11v11H0z" fill="#e4e6e8" /><circle cx="5.500" cy="5.500" r="2.500" stroke="#333" /><path d="M5.500 0v3m0 5v3M0 5.500h3m5 0h3" stroke="#444" /></G></IconSlot>
            <Coord><span>X:</span><SpinInput $w={44} defaultValue="-8315.752mm" /><Spin /></Coord>
            <Coord><span>Y:</span><SpinInput $w={44} defaultValue="4602.909mm" /><Spin /></Coord>
            <Coord><span>Z:</span><SpinInput $w={44} defaultValue="-1088.958mm" /><Spin /></Coord>
            <Prompt $w={78} $end>栅格 <En>= 10.0mm</En></Prompt>
          </StatusLine>
          <StatusLine>
            <Prompt $w={456} $mr={4}>端点 捕捉 <En>Rectangle004</En> 的坐标位置： <En>[-7762.442mm, 4582.909mm, -1386.198mm]</En></Prompt>
            <IconSlot $on aria-label="自适应降级"><G w={12} h={12}><path d="m1 4 3-3h7v7l-3 3H1z" fill="#f4f4f4" stroke="#345" /><path d="M1 4h7v7M8 4l3-3" stroke="#345" /></G></IconSlot>
            <Prompt $w={78} $end>添加时间标记</Prompt>
          </StatusLine>
        </StatusCol>
        <KeyButton aria-label="设置关键点"><G w={22} h={12}><circle cx="5" cy="6" r="3.500" stroke="#111" strokeWidth="2" /><path d="M8.500 6H20m-4 0v3m3-3v4" stroke="#111" strokeWidth="2" /></G></KeyButton>
        <KeyCol $w={51}><FlatButton>自动关键点</FlatButton><FlatButton>设置关键点</FlatButton></KeyCol>
        <KeyCol $w={110}>
          <SelectBox $m="0" $h={16}><Select aria-label="选定对象"><option>选定对象</option></Select></SelectBox>
          <KeyRow><G w={14} h={14}><path d="M2 12h2C6 12 5 3 7 3s1 8 3 8 1-6 3-6" stroke="#e05c5c" strokeWidth="1.200" /><path d="M14 10v4h-4z" fill="#eee" /></G><FlatButton>关键点过滤器</FlatButton></KeyRow>
        </KeyCol>
      </Status>
    </>
  );
}

function Watermarks() {
  return (
    <>
      <Baidu>Ba<small>jing</small></Baidu>
      <Paws viewBox="0 0 32 18" aria-hidden="true"><ellipse cx="8" cy="10" rx="6.500" ry="9" fill="#c9c9c9" /><ellipse cx="24" cy="11" rx="6.500" ry="9" fill="#c9c9c9" /></Paws>
      <Brand>
        <svg width="64" height="95" viewBox="480 93 192 285" fill="none" aria-hidden="true">
          <path d="M524 166 542 177l7-7 8 14 15 6-20 7c-4 18 4 25 23 27 25 2 45 8 53 25 6 12 6 18 0 20-2 14 5 22 5 51h-15l-1-26c-8-7-13-22-17-29-15 4-32 2-43-2-5 14-8 24-9 57h-12l-1-40c-11-18-18-34-17-52 1-15 12-22 14-32l-2-12z" fill="#d2d2d2" />
          <path d="M553 181c25-6 65 0 91-24M563 180c-2-10-9-12-10-22M577 179l-13-27M592 178l-10-25M608 175l-7-18M567 181c20 4 40 2 48-9" stroke="#d2d2d2" strokeWidth="4" />
        </svg>
        <BrandText><BrandTop><span>3D</span>溜溜网</BrandTop><BrandBottom>3D66.COM</BrandBottom></BrandText>
      </Brand>
    </>
  );
}

export default function App() {
  return (
    <Shell>
      <GlobalStyle />
      <TopBar />
      <MainToolbar />
      <Main><FrontView /><CommandPanel /></Main>
      <Bottom />
      <Watermarks />
    </Shell>
  );
}
